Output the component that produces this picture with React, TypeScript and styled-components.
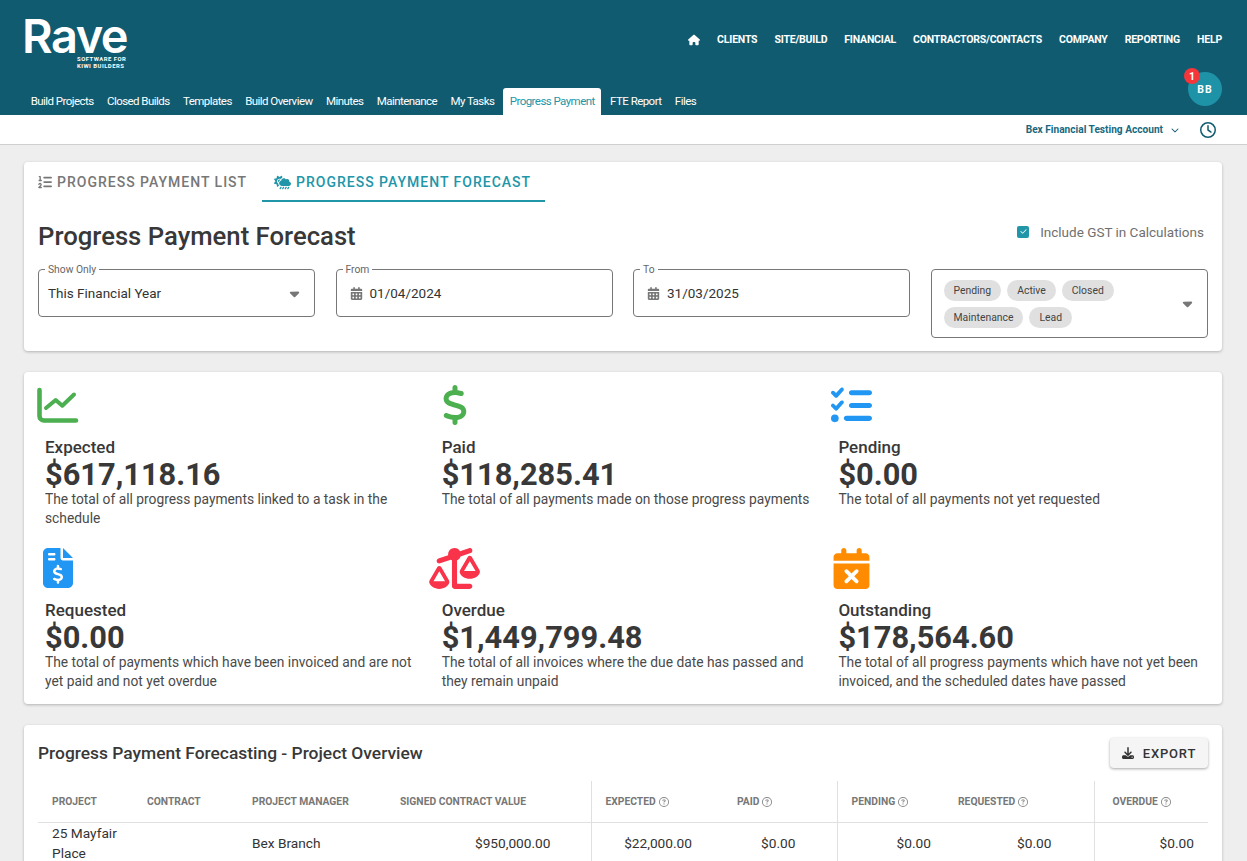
import React from 'react'
import styled, { createGlobalStyle } from 'styled-components'
import {
  FaHouse,
  FaListOl,
  FaCloudSunRain,
  FaCalendarDays,
  FaCaretDown,
  FaCheck,
  FaDollarSign,
  FaListCheck,
  FaFileInvoiceDollar,
  FaScaleUnbalanced,
  FaCalendarXmark,
  FaDownload,
  FaRegCircleQuestion,
  FaRegClock,
  FaChevronDown,
} from 'react-icons/fa6'

const TEAL = '#115b70'
const ACCENT = '#2196a8'
const INK = '#383838'

const GlobalStyle = createGlobalStyle`
  html, body {
    margin: 0;
    height: 100%;
    overflow: hidden;
    background: #eeeeee;
    font-family: Roboto, "Liberation Sans", sans-serif;
    color: #333;
  }
  * { box-sizing: border-box; }
`

const Header = styled.header`
  background: ${TEAL};
  height: 115px;
  padding: 0 25px 0 24px;
  display: flex;
  flex-direction: column;
`

const TopRow = styled.div`
  height: 72px;
  display: flex;
  justify-content: space-between;
  align-items: flex-start;
`

const Logo = styled.div`
  width: 102px;
  padding-top: 15px;
  color: #fff;
  display: flex;
  flex-direction: column;
  align-items: flex-end;
`

const LogoWord = styled.div`
  align-self: flex-start;
  margin-left: -2px;
  font-family: Inter, sans-serif;
  font-weight: 600;
  font-size: 47px;
  line-height: 41px;
  letter-spacing: -1.5px;
`

const LogoSub = styled.div`
  font-size: 5.9px;
  line-height: 7px;
  font-weight: 700;
  letter-spacing: 0.5px;
  width: 49px;
  white-space: nowrap;
`

const MainNav = styled.nav`
  display: flex;
  align-items: center;
  gap: 17px;
  padding-top: 33px;
  color: #fff;
  font-size: 10.5px;
  font-weight: 700;
  line-height: 14px;
  letter-spacing: -0.2px;
  svg {
    font-size: 12px;
    display: block;
  }
`

const BottomRow = styled.div`
  flex: 1;
  display: flex;
  justify-content: space-between;
  align-items: flex-end;
`

const SubTabs = styled.nav`
  display: flex;
  align-items: flex-end;
`

const SubTab = styled.div<{ $active?: boolean }>`
  height: 27px;
  padding: 0 6.7px;
  margin: ${(p) => (p.$active ? '0 2px' : '0')};
  font-size: 11.5px;
  line-height: 27px;
  letter-spacing: -0.55px;
  border-radius: 3px 3px 0 0;
  color: ${(p) => (p.$active ? ACCENT : '#fff')};
  background: ${(p) => (p.$active ? '#fff' : 'transparent')};
`

const Avatar = styled.div`
  position: relative;
  width: 34px;
  height: 34px;
  margin-bottom: 9px;
  border-radius: 50%;
  background: #1e93a8;
  color: #fff;
  font-size: 10.5px;
  font-weight: 700;
  letter-spacing: 1px;
  display: flex;
  align-items: center;
  justify-content: center;
`

const Badge = styled.span`
  position: absolute;
  top: -4px;
  left: -4px;
  width: 16px;
  height: 16px;
  border-radius: 50%;
  background: #f4363a;
  font-size: 10.5px;
  letter-spacing: 0;
  display: flex;
  align-items: center;
  justify-content: center;
`

const SubBar = styled.div`
  height: 30px;
  background: #fff;
  border-bottom: 1px solid #cfcfcf;
  display: flex;
  align-items: center;
  justify-content: flex-end;
  padding-right: 31px;
  color: ${TEAL};
`

const Account = styled.span`
  font-size: 10.15px;
  font-weight: 700;
  color: #17697f;
`

const AccountChevron = styled.span`
  display: flex;
  margin: 0 21px 0 8px;
  font-size: 8px;
`

const ClockIcon = styled.span`
  display: flex;
  font-size: 16px;
`

const Page = styled.main`
  padding: 17px 25px 0 24px;
  display: flex;
  flex-direction: column;
  gap: 21px;
`

const Card = styled.section`
  background: #fff;
  border-radius: 4px;
  box-shadow: 0 1px 3px rgba(0, 0, 0, 0.25);
`

const FilterCard = styled(Card)`
  height: 189px;
  padding: 0 14px;
`

const ViewTabs = styled.div`
  display: flex;
  height: 40px;
`

const ViewTab = styled.div<{ $active?: boolean }>`
  display: flex;
  align-items: center;
  gap: 5px;
  padding: ${(p) => (p.$active ? '2px 14px 0 12px' : '2px 0 0 0')};
  width: ${(p) => (p.$active ? '283px' : '224px')};
  font-size: 14px;
  font-weight: 500;
  letter-spacing: 1px;
  color: ${(p) => (p.$active ? ACCENT : '#777')};
  border-bottom: 2px solid ${(p) => (p.$active ? ACCENT : 'transparent')};
  white-space: nowrap;
  svg {
    flex-shrink: 0;
  }
`

const TitleRow = styled.div`
  height: 67px;
  display: flex;
  align-items: center;
  justify-content: space-between;
  padding-right: 4px;
`

const PageTitle = styled.h1`
  margin: 0;
  font-size: 25.7px;
  font-weight: 500;
  color: ${INK};
`

const GstToggle = styled.label`
  display: flex;
  align-items: center;
  gap: 11px;
  font-size: 13.5px;
  color: #707070;
  margin-top: -8px;
`

const CheckBox = styled.span`
  width: 12px;
  height: 12px;
  border-radius: 2px;
  background: ${ACCENT};
  color: #fff;
  font-size: 7px;
  display: flex;
  align-items: center;
  justify-content: center;
`

const Filters = styled.div`
  display: grid;
  grid-template-columns: 277px 277px 277px 277px;
  column-gap: 20.5px;
  align-items: start;
`

const Field = styled.div<{ $tall?: boolean }>`
  position: relative;
  height: ${(p) => (p.$tall ? '69px' : '48px')};
  border: 1px solid #777;
  border-radius: 4px;
  display: flex;
  align-items: center;
  padding: ${(p) => (p.$tall ? '0 14px 0 12px' : '0 14px 0 9px')};
  font-size: 13.5px;
  color: #333;
`

const FieldLabel = styled.span`
  position: absolute;
  top: -6px;
  left: 6px;
  padding: 0 3px;
  background: #fff;
  font-size: 10.3px;
  line-height: 12px;
  color: #666;
`

const FieldValue = styled.span`
  flex: 1;
`

const DateIcon = styled.span`
  display: flex;
  margin: 0 7px 0 4px;
  font-size: 13px;
  color: #777;
`

const Caret = styled.span`
  display: flex;
  font-size: 15px;
  color: #777;
  margin-right: -2px;
`

const Chips = styled.div`
  display: flex;
  flex-wrap: wrap;
  gap: 6px;
  width: 190px;
  margin-right: auto;
`

const Chip = styled.span`
  height: 21px;
  padding: 0 10px;
  border-radius: 11px;
  background: #e0e0e0;
  font-size: 10.4px;
  line-height: 21px;
  color: #444;
`

const StatsCard = styled(Card)`
  height: 332px;
  padding: 13px 0 0 21px;
  display: grid;
  grid-template-columns: repeat(3, 396.7px);
  grid-auto-rows: 143px;
  row-gap: 20px;
`

const IconBox = styled.div<{ $color: string }>`
  width: 56px;
  height: 40px;
  margin-left: -15px;
  display: flex;
  align-items: center;
  justify-content: center;
  color: ${(p) => p.$color};
`

const StatTitle = styled.div`
  margin-top: 12px;
  font-size: 17px;
  font-weight: 500;
  line-height: 20px;
  color: ${INK};
`

const StatAmount = styled.div`
  margin: 1px 0 -1px;
  font-size: 30.8px;
  font-weight: 700;
  line-height: 33px;
  color: ${INK};
`

const StatText = styled.div`
  font-size: 13.8px;
  line-height: 19px;
  color: #4a4a4a;
  max-width: 372px;
`

const TableCard = styled(Card)`
  padding: 13px 14px 0;
  height: 200px;
`

const TableHead = styled.div`
  display: flex;
  align-items: center;
  justify-content: space-between;
  height: 30px;
  margin-bottom: 13px;
`

const TableTitle = styled.h2`
  margin: 0;
  font-size: 17.4px;
  font-weight: 500;
  color: ${INK};
`

const ExportButton = styled.button`
  width: 98px;
  height: 30px;
  border: 0;
  border-radius: 4px;
  background: #f5f5f5;
  box-shadow: 0 1px 3px rgba(0, 0, 0, 0.35);
  display: flex;
  align-items: center;
  justify-content: center;
  gap: 9px;
  font-family: inherit;
  font-size: 13px;
  font-weight: 500;
  letter-spacing: 0.8px;
  color: #333;
  svg {
    font-size: 12px;
  }
`

const Table = styled.table`
  width: 1170px;
  table-layout: fixed;
  border-collapse: collapse;
`

const Th = styled.th<{ $sep?: boolean; $pl?: number }>`
  height: 41px;
  padding: 0 0 0 ${(p) => p.$pl ?? 14}px;
  text-align: left;
  font-size: 10.3px;
  font-weight: 700;
  color: #777;
  border-bottom: 1px solid #e0e0e0;
  border-left: ${(p) => (p.$sep ? '1px solid #e0e0e0' : '0')};
  white-space: nowrap;
  svg {
    font-size: 10px;
    margin-left: 3px;
    vertical-align: -2px;
    color: #888;
  }
`

const Td = styled.td<{ $sep?: boolean; $pr?: number }>`
  height: 40px;
  padding: 0 ${(p) => p.$pr ?? 0}px 0 14px;
  text-align: ${(p) => (p.$pr !== undefined ? 'right' : 'left')};
  font-size: 13.7px;
  line-height: 20px;
  color: #333;
  border-left: ${(p) => (p.$sep ? '1px solid #e0e0e0' : '0')};
`

const ChartIcon = () => (
  <svg width="42" height="36" viewBox="0 0 42 36" fill="none" stroke="currentColor" strokeLinecap="round" strokeLinejoin="round">
    <path d="M2.5 3 V29 a4.5 4.5 0 0 0 4.5 4.5 H39" strokeWidth="4.6" />
    <path d="M9 21 L18.7 13 L25.3 18.7 L37 7.5" strokeWidth="4" />
  </svg>
)

const navItems = ['CLIENTS', 'SITE/BUILD', 'FINANCIAL', 'CONTRACTORS/CONTACTS', 'COMPANY', 'REPORTING', 'HELP']
const subTabs = ['Build Projects', 'Closed Builds', 'Templates', 'Build Overview', 'Minutes', 'Maintenance', 'My Tasks', 'Progress Payment', 'FTE Report', 'Files']
const statuses = ['Pending', 'Active', 'Closed', 'Maintenance', 'Lead']

const stats = [
  { color: '#4caf50', icon: <ChartIcon />, title: 'Expected', amount: '$617,118.16', text: 'The total of all progress payments linked to a task in the schedule' },
  { color: '#4caf50', icon: <FaDollarSign size={40} />, title: 'Paid', amount: '$118,285.41', text: 'The total of all payments made on those progress payments' },
  { color: '#2196f3', icon: <FaListCheck size={41} />, title: 'Pending', amount: '$0.00', text: 'The total of all payments not yet requested' },
  { color: '#2196f3', icon: <FaFileInvoiceDollar size={40} />, title: 'Requested', amount: '$0.00', text: 'The total of payments which have been invoiced and are not yet paid and not yet overdue' },
  { color: '#f8334a', icon: <FaScaleUnbalanced size={51} />, title: 'Overdue', amount: '$1,449,799.48', text: 'The total of all invoices where the due date has passed and they remain unpaid' },
  { color: '#ff8c00', icon: <FaCalendarXmark size={41} />, title: 'Outstanding', amount: '$178,564.60', text: 'The total of all progress payments which have not yet been invoiced, and the scheduled dates have passed' },
]

const columns = [95, 105, 148, 205, 132, 114, 107, 150, 114]

export default function App() {
  return (
    <>
      <GlobalStyle />
      <Header>
        <TopRow>
          <Logo>
            <LogoWord>Rave</LogoWord>
            <LogoSub>
              SOFTWARE FOR
              <br />
              KIWI BUILDERS
            </LogoSub>
          </Logo>
          <MainNav>
            <FaHouse />
            {navItems.map((item) => (
              <span key={item}>{item}</span>
            ))}
          </MainNav>
        </TopRow>
        <BottomRow>
          <SubTabs>
            {subTabs.map((tab) => (
              <SubTab key={tab} $active={tab === 'Progress Payment'}>
                {tab}
              </SubTab>
            ))}
          </SubTabs>
          <Avatar>
            BB
            <Badge>1</Badge>
          </Avatar>
        </BottomRow>
      </Header>
      <SubBar>
        <Account>Bex Financial Testing Account</Account>
        <AccountChevron>
          <FaChevronDown />
        </AccountChevron>
        <ClockIcon>
          <FaRegClock />
        </ClockIcon>
      </SubBar>
      <Page>
        <FilterCard>
          <ViewTabs>
            <ViewTab>
              <FaListOl size={14} />
              PROGRESS PAYMENT LIST
            </ViewTab>
            <ViewTab $active>
              <FaCloudSunRain size={17} />
              PROGRESS PAYMENT FORECAST
            </ViewTab>
          </ViewTabs>
          <TitleRow>
            <PageTitle>Progress Payment Forecast</PageTitle>
            <GstToggle>
              <CheckBox>
                <FaCheck />
              </CheckBox>
              Include GST in Calculations
            </GstToggle>
          </TitleRow>
          <Filters>
            <Field>
              <FieldLabel>Show Only</FieldLabel>
              <FieldValue>This Financial Year</FieldValue>
              <Caret>
                <FaCaretDown />
              </Caret>
            </Field>
            <Field>
              <FieldLabel>From</FieldLabel>
              <DateIcon>
                <FaCalendarDays />
              </DateIcon>
              <FieldValue>01/04/2024</FieldValue>
            </Field>
            <Field>
              <FieldLabel>To</FieldLabel>
              <DateIcon>
                <FaCalendarDays />
              </DateIcon>
              <FieldValue>31/03/2025</FieldValue>
            </Field>
            <Field $tall>
              <Chips>
                {statuses.map((status) => (
                  <Chip key={status}>{status}</Chip>
                ))}
              </Chips>
              <Caret>
                <FaCaretDown />
              </Caret>
            </Field>
          </Filters>
        </FilterCard>

        <StatsCard>
          {stats.map((stat) => (
            <div key={stat.title}>
              <IconBox $color={stat.color}>{stat.icon}</IconBox>
              <StatTitle>{stat.title}</StatTitle>
              <StatAmount>{stat.amount}</StatAmount>
              <StatText>{stat.text}</StatText>
            </div>
          ))}
        </StatsCard>

        <TableCard>
          <TableHead>
            <TableTitle>Progress Payment Forecasting - Project Overview</TableTitle>
            <ExportButton>
              <FaDownload />
              EXPORT
            </ExportButton>
          </TableHead>
          <Table>
            <colgroup>
              {columns.map((width, i) => (
                <col key={i} width={width} />
              ))}
            </colgroup>
            <thead>
              <tr>
                <Th>PROJECT</Th>
                <Th>CONTRACT</Th>
                <Th>PROJECT MANAGER</Th>
                <Th>SIGNED CONTRACT VALUE</Th>
                <Th $sep>
                  EXPECTED
                  <FaRegCircleQuestion />
                </Th>
                <Th>
                  PAID
                  <FaRegCircleQuestion />
                </Th>
                <Th $sep>
                  PENDING
                  <FaRegCircleQuestion />
                </Th>
                <Th>
                  REQUESTED
                  <FaRegCircleQuestion />
                </Th>
                <Th $sep $pl={18}>
                  OVERDUE
                  <FaRegCircleQuestion />
                </Th>
              </tr>
            </thead>
            <tbody>
              <tr>
                <Td>25 Mayfair Place</Td>
                <Td />
                <Td>Bex Branch</Td>
                <Td $pr={40}>$950,000.00</Td>
                <Td $sep $pr={31}>$22,000.00</Td>
                <Td $pr={41}>$0.00</Td>
                <Td $sep $pr={13}>$0.00</Td>
                <Td $pr={42}>$0.00</Td>
                <Td $sep $pr={14}>$0.00</Td>
              </tr>
            </tbody>
          </Table>
        </TableCard>
      </Page>
    </>
  )
}
